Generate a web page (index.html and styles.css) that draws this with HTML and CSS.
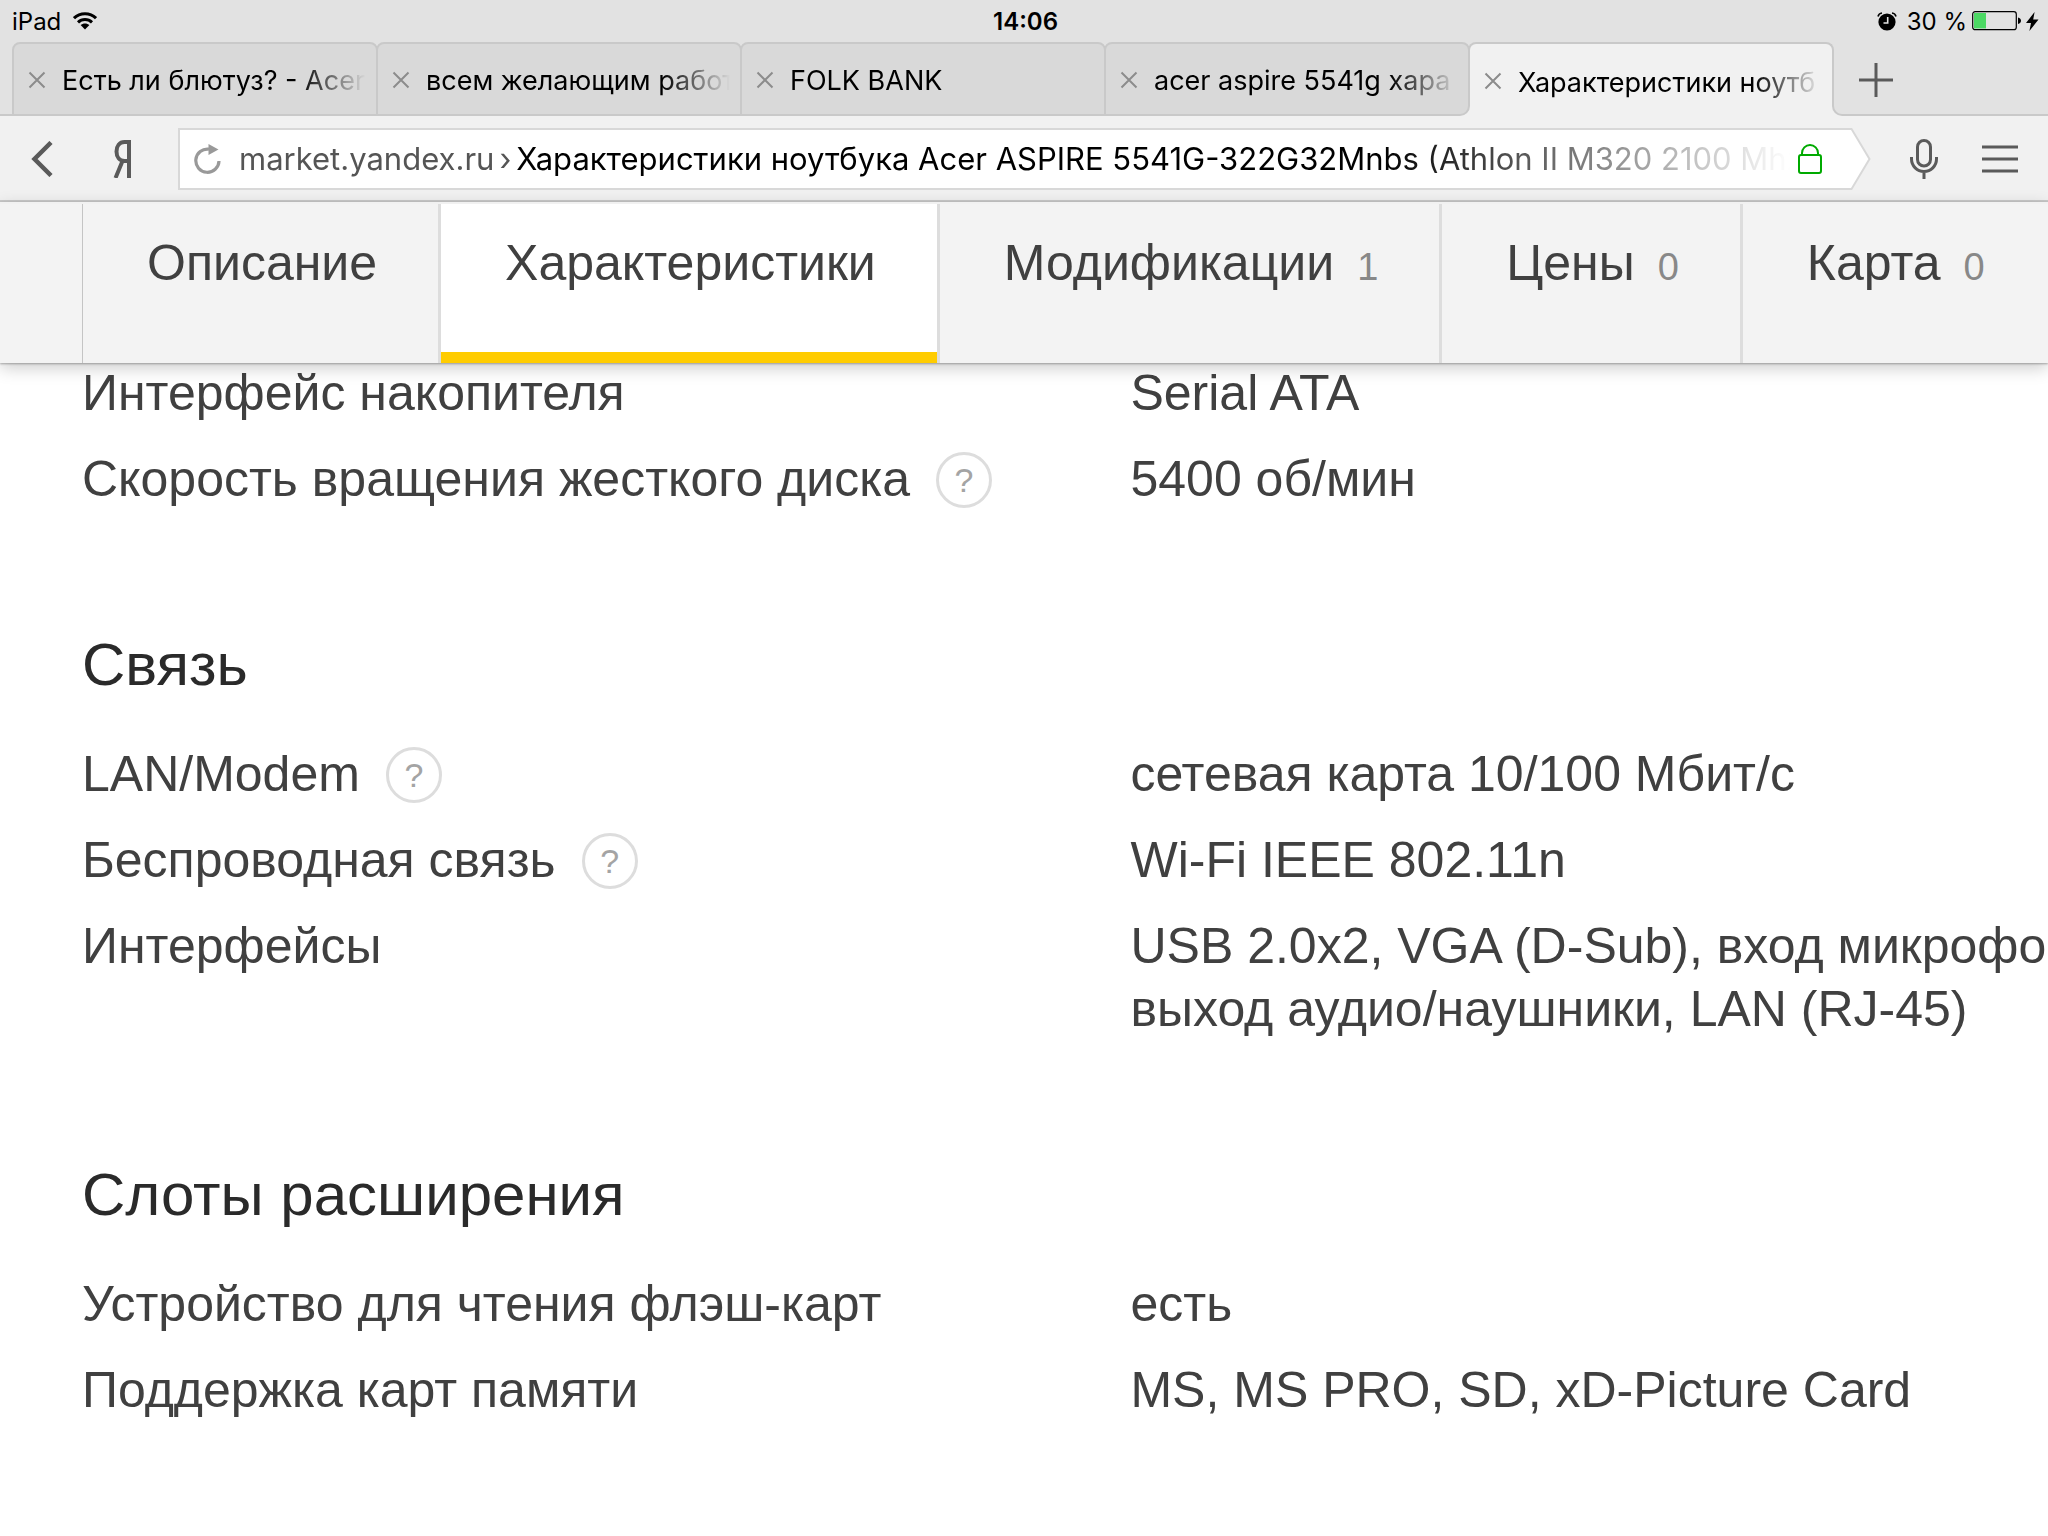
FILE: index.html
```html
<!DOCTYPE html>
<html lang="ru">
<head>
<meta charset="utf-8">
<title>Характеристики ноутбука Acer ASPIRE 5541G-322G32Mnbs</title>
<link rel="stylesheet" href="styles.css">
</head>
<body>
<header class="browser">
  <div class="status">
    <div class="status-left">
      <span>iPad</span>
      <svg width="24" height="18" viewBox="0 0 24 18" aria-hidden="true">
        <g fill="none" stroke="#000" stroke-width="3"><path d="M1 6.2C7 .2 17 .2 23 6.2"/><path d="M5 10.4C9 6.6 15 6.6 19 10.4"/></g>
        <path d="M7.6 13C10 10.9 14 10.9 16.4 13L12 17.6z"/>
      </svg>
    </div>
    <time class="clock">14:06</time>
    <div class="status-right">
      <svg width="20" height="19" viewBox="0 0 20 19" aria-hidden="true">
        <circle cx="10" cy="10" r="8.6"/>
        <path d="M1 4.5C1.500 2.500 3 1.200 5 1M15 1C17 1.200 18.500 2.500 19 4.500" fill="none" stroke="#000" stroke-width="1.600"/>
        <path d="M10.700 5v6H6.500" fill="none" stroke="#e2e2e2" stroke-width="1.600"/>
      </svg>
      <span class="percent">30 %</span>
      <svg width="50" height="20" viewBox="0 0 50 20" aria-hidden="true">
        <rect x=".7" y=".7" width="43.600" height="18" rx="2.500" fill="none" stroke="#000" stroke-width="1.200"/>
        <rect x="2" y="2" width="12" height="15.400" fill="#4cd964"/>
        <path d="M46 6.500C50 7 50 12.500 46 13z"/>
      </svg>
      <svg class="bolt" width="13" height="19" viewBox="0 0 13 19" aria-hidden="true"><path d="M8.600 0L0 11h5L3.400 19L12.500 7.500H7.200z"/></svg>
    </div>
  </div>

  <nav class="tabs" aria-label="Вкладки">
    <div class="tab">
      <button class="close" aria-label="Закрыть"><svg width="18" height="18" viewBox="0 0 18 18"><path d="M1.500 1.500l15 15M16.500 1.500l-15 15"/></svg></button>
      <a class="tab-title" href="#">Есть ли блютуз? - Acer</a>
    </div>
    <div class="tab">
      <button class="close" aria-label="Закрыть"><svg width="18" height="18" viewBox="0 0 18 18"><path d="M1.500 1.500l15 15M16.500 1.500l-15 15"/></svg></button>
      <a class="tab-title" href="#">всем желающим работ</a>
    </div>
    <div class="tab">
      <button class="close" aria-label="Закрыть"><svg width="18" height="18" viewBox="0 0 18 18"><path d="M1.500 1.500l15 15M16.500 1.500l-15 15"/></svg></button>
      <a class="tab-title" href="#">FOLK BANK</a>
    </div>
    <div class="tab tab-before">
      <button class="close" aria-label="Закрыть"><svg width="18" height="18" viewBox="0 0 18 18"><path d="M1.500 1.500l15 15M16.500 1.500l-15 15"/></svg></button>
      <a class="tab-title" href="#">acer aspire 5541g хара</a>
    </div>
    <div class="tab tab-active">
      <button class="close" aria-label="Закрыть"><svg width="18" height="18" viewBox="0 0 18 18"><path d="M1.500 1.500l15 15M16.500 1.500l-15 15"/></svg></button>
      <a class="tab-title" href="#">Характеристики ноутб</a>
    </div>
    <div class="tab-rest">
      <button class="icon-button" aria-label="Новая вкладка"><svg width="34" height="34" viewBox="0 0 34 34"><path d="M17 0v34M0 17h34" stroke="#5a5a5a" stroke-width="3"/></svg></button>
    </div>
  </nav>

  <div class="toolbar">
    <button class="icon-button back" aria-label="Назад"><svg width="22" height="36" viewBox="0 0 22 36"><path d="M20 1.500L3.500 18L20 34.500" fill="none" stroke="#5a5a5a" stroke-width="4.500"/></svg></button>
    <a class="home" href="#" aria-label="Яндекс"><svg width="20" height="38" viewBox="0 0 20 38"><path d="M16 38V2H11.500C6.500 2 3.500 6 3.500 11.500S6.500 21 11.500 21H16M9.500 21L2.500 38" fill="none" stroke="#5a5a5a" stroke-width="4"/></svg></a>
    <div class="address">
      <div class="address-box">
        <button class="icon-button" aria-label="Обновить"><svg width="28" height="30" viewBox="0 0 28 30"><path d="M15 5.200A11.600 11.600 0 1 0 25 17" fill="none" stroke="#999" stroke-width="3.200"/><path d="M14.500 0L24.500 5.500L14.500 11z" fill="#999"/></svg></button>
        <button class="url"><span class="host">market.yandex.ru</span><span class="crumb">›</span>Характеристики ноутбука Acer ASPIRE 5541G-322G32Mnbs (Athlon II M320 2100 Mhz</button>
        <svg class="lock" width="26" height="30" viewBox="0 0 26 30" role="img" aria-label="Защищённое соединение"><path d="M5 11V9a8 8 0 0 1 16 0v2" fill="none" stroke="#0a0" stroke-width="2"/><rect x="2" y="11" width="22" height="18" rx="2" fill="none" stroke="#0a0" stroke-width="2"/></svg>
      </div>
      <svg class="address-tip" width="20" height="62" viewBox="0 0 20 62" aria-hidden="true"><path d="M0 1H.5L18.500 31L.5 61H0" fill="#fff" stroke="#d8d8d8" stroke-width="2"/></svg>
    </div>
    <button class="icon-button mic" aria-label="Голосовой поиск"><svg width="28" height="40" viewBox="0 0 28 40"><g fill="none" stroke="#5a5a5a" stroke-width="3"><rect x="7.500" y="1.500" width="13" height="25.500" rx="6.500"/><path d="M1.500 18v2a12.500 12.500 0 0 0 25 0v-2M14 32.500V40"/></g></svg></button>
    <button class="icon-button" aria-label="Меню"><svg width="36" height="28" viewBox="0 0 36 28"><path d="M0 2h36M0 14h36M0 26h36" stroke="#5a5a5a" stroke-width="3"/></svg></button>
  </div>
</header>

<nav class="sections">
  <a href="#">Описание</a>
  <a class="current" href="#">Характеристики</a>
  <a href="#">Модификации<span class="count">1</span></a>
  <a href="#">Цены<span class="count">0</span></a>
  <a href="#">Карта<span class="count">0</span></a>
</nav>

<main class="specs">
  <table>
    <tr><th scope="row">Интерфейс накопителя</th><td>Serial ATA</td></tr>
    <tr><th scope="row"><span class="label">Скорость вращения жесткого диска <button class="help">?</button></span></th><td>5400 об/мин</td></tr>
  </table>
  <h2>Связь</h2>
  <table>
    <tr><th scope="row"><span class="label">LAN/Modem <button class="help">?</button></span></th><td>сетевая карта 10/100 Мбит/с</td></tr>
    <tr><th scope="row"><span class="label">Беспроводная связь <button class="help">?</button></span></th><td>Wi-Fi IEEE 802.11n</td></tr>
    <tr><th scope="row">Интерфейсы</th><td>USB 2.0x2, VGA (D-Sub), вход микрофон<br>выход аудио/наушники, LAN (RJ-45)</td></tr>
  </table>
  <h2>Слоты расширения</h2>
  <table>
    <tr><th scope="row">Устройство для чтения флэш-карт</th><td>есть</td></tr>
    <tr><th scope="row">Поддержка карт памяти</th><td>MS, MS PRO, SD, xD-Picture Card</td></tr>
  </table>
</main>
</body>
</html>
```
FILE: styles.css
```css
* { box-sizing: border-box; }

body {
  margin: 0;
  background: #fff;
  font-family: "Liberation Sans", Arial, sans-serif;
}

a { color: inherit; text-decoration: none; }
button { margin: 0; padding: 0; border: 0; background: none; font: inherit; color: inherit; }
svg { display: block; flex: none; }

/* Browser chrome */
.browser { font-family: Inter, sans-serif; color: #000; }

.status {
  display: grid;
  grid-template-columns: 1fr auto 1fr;
  align-items: center;
  height: 42px;
  padding: 0 9px 0 12px;
  background: #e2e2e2;
  font-size: 24px;
}
.status-left, .status-right { display: flex; align-items: center; }
.status-left { gap: 12px; }
.status-right { justify-content: flex-end; }
.clock { font-weight: 600; }
.percent { margin: 0 5px 0 10px; }
.bolt { margin-left: 4px; }

.tabs {
  display: flex;
  height: 74px;
  background: linear-gradient(#e2e2e2 60px, #f1f1f1 60px);
}
.tabs::before {
  content: "";
  width: 12px;
  background: #e2e2e2;
  border-bottom: 2px solid #c9c9c9;
}
.tab {
  position: relative;
  display: flex;
  align-items: center;
  flex: 0 1 366px;
  min-width: 0;
  gap: 16px;
  padding: 2px 8px 0 14px;
  background: #d9d9d9;
  border: 2px solid #c9c9c9;
  border-radius: 8px 8px 0 0;
}
.tab + .tab { margin-left: -2px; }
.tab-before { border-bottom-right-radius: 10px; }
.tab-active {
  height: 62px;
  padding-top: 14px;
  background: #f1f1f1;
  border-bottom: 0;
}
.close svg { fill: none; stroke: #8c8c8c; stroke-width: 2; }
.tab-title {
  flex: 1;
  overflow: hidden;
  padding-top: 2px;
  white-space: nowrap;
  font-size: 27px;
  line-height: 36px;
  mask-image: linear-gradient(to right, #000 calc(100% - 70px), transparent calc(100% - 2px));
}
.tab-active .tab-title { padding-top: 4px; }
.tab-rest {
  position: relative;
  display: flex;
  flex: 1;
  align-items: center;
  align-self: flex-end;
  height: 62px;
  margin-left: -2px;
  padding: 0 0 8px 25px;
  background: #e2e2e2;
  border: solid #c9c9c9;
  border-width: 0 0 2px 2px;
  border-bottom-left-radius: 10px;
}

.toolbar {
  display: flex;
  align-items: center;
  height: 86px;
  padding: 2px 30px 0 31px;
  background: #f1f1f1;
  border-bottom: 2px solid #c9c9c9;
}
.home { margin: 0 45px 0 60px; }
.address { display: flex; flex: 1; min-width: 0; }
.address-box {
  display: flex;
  flex: 1;
  align-items: center;
  min-width: 0;
  height: 62px;
  padding: 0 28px 0 14px;
  background: #fff;
  border: 2px solid #d8d8d8;
  border-right: 0;
}
.url {
  flex: 1;
  min-width: 0;
  margin: 0 6px 0 17px;
  overflow: hidden;
  text-align: left;
  white-space: nowrap;
  font-size: 31px;
  line-height: 44px;
  mask-image: linear-gradient(to right, #000 calc(100% - 410px), transparent);
}
.host, .crumb { color: #555; }
.crumb { margin: 0 5px; }
.mic { margin: 0 44px 0 39px; }

/* Product page sections */
.sections {
  position: relative;
  display: flex;
  height: 161px;
  margin-bottom: -1px;
  padding-left: 82px;
  background: #f3f3f3;
  border-top: 2px solid #f1f1f1;
  box-shadow: 0 1px 2px rgba(0, 0, 0, .3), 0 5px 16px rgba(0, 0, 0, .2);
  color: #404040;
  font-size: 50px;
  line-height: 63px;
}
.sections a {
  flex: none;
  padding: 28px 61px 0 64px;
  border-right: 3px solid #ddd;
  white-space: nowrap;
}
.sections a:first-child { border-left: 1px solid #c4c4c4; }
.sections a:last-child { border-right: 0; }
.sections .current { background: #fff; box-shadow: inset 0 -11px #fc0; }
.count { margin-left: 23px; color: #888; font-size: 38px; }

.specs { padding-left: 82px; overflow: hidden; color: #404040; font-size: 50px; line-height: 63px; }
table { width: 100%; table-layout: fixed; border-spacing: 0; }
th, td { padding: 0 0 23px; text-align: left; vertical-align: top; font-weight: 400; white-space: nowrap; }
th { width: 53.33%; }
td { overflow: hidden; }
.label { display: flex; align-items: center; gap: 26px; height: 63px; }
.help {
  width: 56px;
  height: 56px;
  border: 3px solid #ddd;
  border-radius: 50%;
  color: #a4a4a4;
  font-size: 34px;
  line-height: 50px;
}
h2 {
  margin: 0;
  padding: 95px 0 42px;
  color: #2a2a2a;
  font-size: 60px;
  font-weight: 400;
  line-height: 72px;
}
```
